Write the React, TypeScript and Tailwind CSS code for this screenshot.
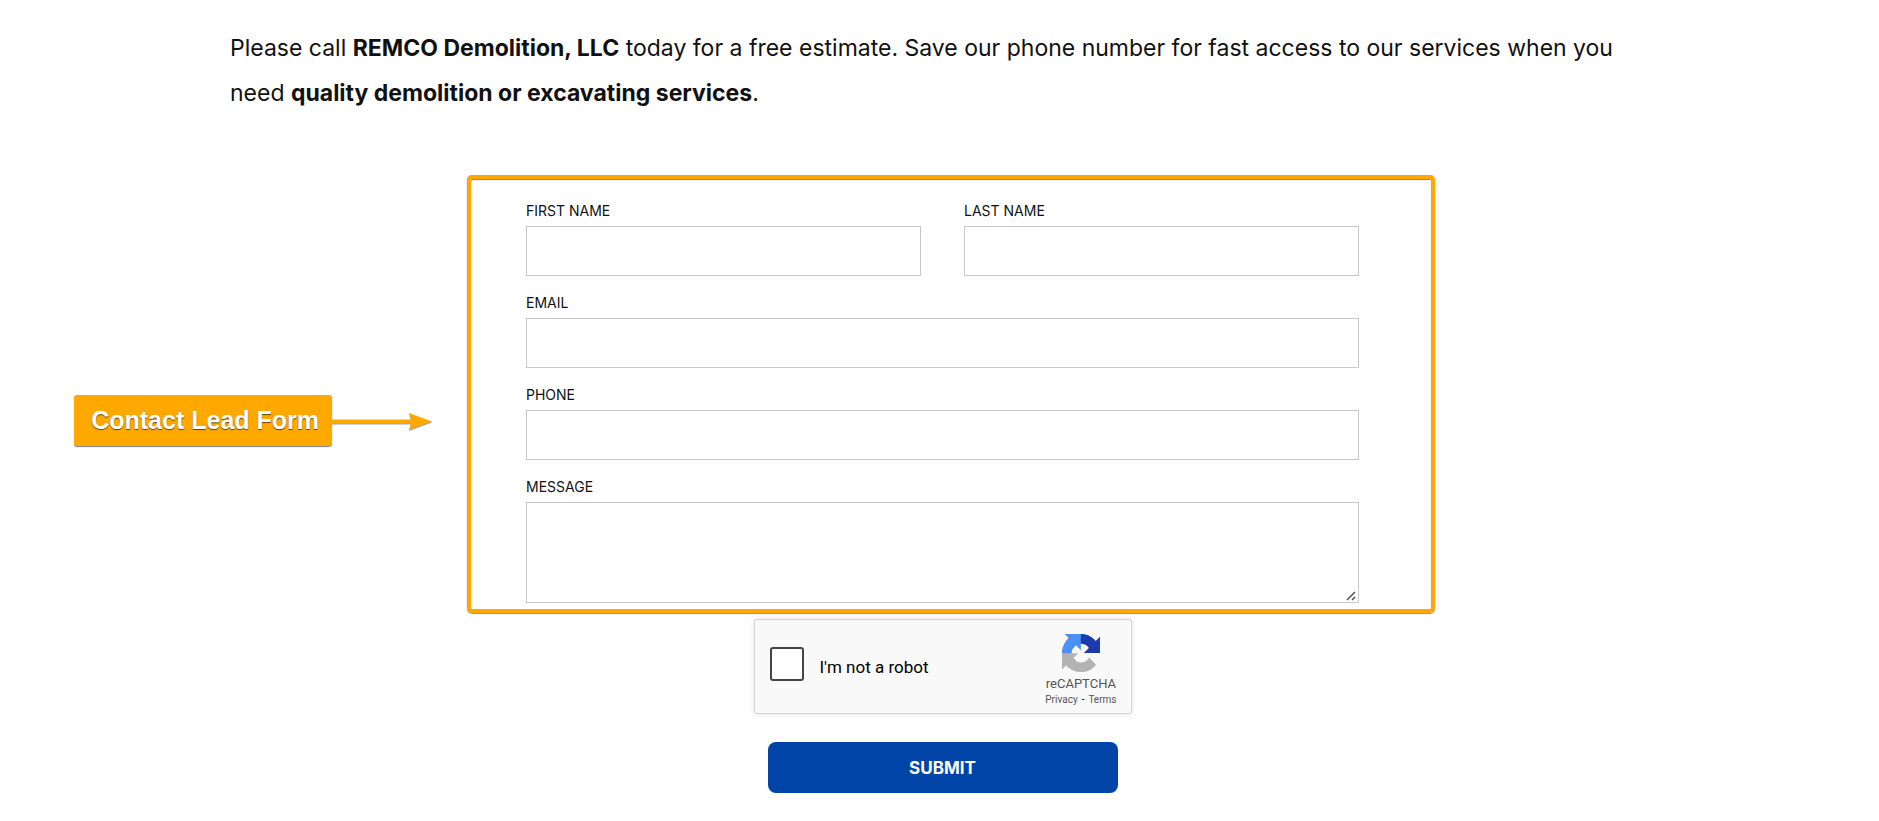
import { useState } from "react";

type FieldProps = {
  id: string;
  label: string;
  type?: string;
};

function Field({ id, label, type = "text" }: FieldProps) {
  return (
    <div className="flex flex-col gap-[3px]">
      <label htmlFor={id} className="text-sm leading-6 uppercase">
        {label}
      </label>
      <input
        id={id}
        name={id}
        type={type}
        className="h-[50px] w-full border border-[#c8c8c8] bg-white px-3 text-base focus:outline-none focus:border-[#0044a8]"
      />
    </div>
  );
}

function MessageField() {
  return (
    <div className="flex flex-col gap-[3px]">
      <label htmlFor="message" className="text-sm leading-6 uppercase">
        Message
      </label>
      <div className="relative">
        <textarea
          id="message"
          name="message"
          className="block h-[101px] w-full resize-y border border-[#c8c8c8] bg-white px-3 py-2 text-base focus:outline-none focus:border-[#0044a8]"
        />
        {/* Resize grip */}
        <svg
          viewBox="0 0 14 14"
          className="pointer-events-none absolute right-px bottom-px size-[14px] bg-white"
          aria-hidden="true"
        >
          <path d="M3 12l8-8M8 12l3-3" fill="none" stroke="#555" strokeWidth="1.6" />
        </svg>
      </div>
    </div>
  );
}

function RecaptchaLogo() {
  return (
    <svg viewBox="0 0 64 64" className="size-[38px]" aria-hidden="true">
      <path
        fill="#1c3aa9"
        d="M64 31.955c-.002-.46-.012-.918-.033-1.373V4.527l-7.203 7.203C50.87 4.5 41.973-.09 32.003-.09 21.628-.09 12.41 4.88 6.55 12.58l11.806 11.93a15.637 15.637 0 0 1 4.782-5.367c2.062-1.61 4.984-2.926 9.02-2.926.486 0 .862.057 1.138.164 4.998.394 9.33 3.153 11.88 7.155l-8.357 8.357c10.585-.042 22.542-.066 27.18.06"
      />
      <path
        fill="#4a90f5"
        d="M31.862.094c-.46.002-.917.012-1.373.032H4.434l7.203 7.203C4.407 13.224-.183 22.12-.183 32.092c0 10.375 4.97 19.592 12.67 25.453l11.93-11.806a15.637 15.637 0 0 1-5.367-4.782c-1.61-2.062-2.926-4.984-2.926-9.02 0-.486.057-.862.164-1.138.394-4.998 3.153-9.33 7.155-11.88l8.357 8.357c-.042-10.585-.066-22.542.06-27.18"
      />
      <path
        fill="#b3b3b3"
        d="M.002 32.23c.002.46.012.918.033 1.373V59.66l7.203-7.203c5.903 7.23 14.8 11.82 24.772 11.82 10.375 0 19.592-4.97 25.452-12.67L45.655 39.676a15.637 15.637 0 0 1-4.782 5.367c-2.062 1.61-4.984 2.926-9.02 2.926-.486 0-.862-.057-1.138-.164-4.998-.394-9.33-3.153-11.88-7.155l8.357-8.357C16.607 32.335 4.65 32.36.013 32.233"
      />
    </svg>
  );
}

function Recaptcha() {
  const [checked, setChecked] = useState(false);

  return (
    <div className="flex h-[95px] w-[378px] items-center justify-between rounded-[3px] border border-[#d3d3d3] bg-[#f9f9f9] pr-[14px] pl-[15px] font-[Roboto,sans-serif] shadow-[0_0_4px_1px_rgba(0,0,0,0.08)]">
      <div className="flex items-center gap-4 pb-[5px]">
        <input
          id="robot"
          type="checkbox"
          checked={checked}
          onChange={(e) => setChecked(e.target.checked)}
          className="size-[34px] appearance-none rounded-[3px] border-2 border-[#444] bg-white checked:bg-[#4a90f5]"
        />
        <label htmlFor="robot" className="pt-[5px] text-[17px] leading-6 text-black">
          I'm not a robot
        </label>
      </div>
      <div className="flex flex-col items-center pt-2 text-[#555]">
        <RecaptchaLogo />
        <p className="mt-1 text-[13px] leading-4">reCAPTCHA</p>
        <p className="flex gap-1 text-[10px] leading-4">
          <a href="#privacy">Privacy</a>
          <span className="text-black">-</span>
          <a href="#terms">Terms</a>
        </p>
      </div>
    </div>
  );
}

function Callout() {
  return (
    <div className="mt-[220px] flex items-center self-start justify-self-end pr-[35px]">
      <p className="rounded-[3px] bg-[#ffa800] py-2 pr-[13px] pl-[17px] font-['Liberation_Sans',sans-serif] text-[25px] leading-[35px] font-bold whitespace-nowrap text-white shadow-[0_1px_1px_rgba(0,0,0,0.5)] [text-shadow:0_1px_1px_rgba(0,0,0,0.6)]">
        Contact Lead Form
      </p>
      <svg viewBox="0 0 100 22" className="h-[22px] w-[100px]" aria-hidden="true">
        <path d="M0 10.5h79L77 4l23 8.500-23 8.500 2-6.500H0z" fill="#666" opacity="0.6" />
        <path d="M0 9.500h79L77 3l23 8.500-23 8 2-6H0z" fill="#ffa800" />
      </svg>
    </div>
  );
}

export default function App() {
  return (
    <main className="bg-white pt-[26px] pb-7 font-[Inter,sans-serif] text-[#111]">
      {/* Intro text */}
      <p className="mx-auto w-full max-w-[1419px] text-[23px] leading-[45px]">
        Please call <strong>REMCO Demolition, LLC</strong> today for a free
        estimate. Save our phone number for fast access to our services when you
        need <strong>quality demolition or excavating services</strong>.
      </p>

      {/* Contact form */}
      <div className="mt-[59px] grid grid-cols-[467fr_968fr_444fr]">
        <Callout />
        <form onSubmit={(e) => e.preventDefault()}>
          <div className="flex flex-col gap-[15px] rounded-[5px] border-4 border-[#ffa800] pt-5 pr-[72px] pb-[6px] pl-[55px] shadow-[0_0_1px_rgba(0,0,0,0.4),0_1px_1px_rgba(0,0,0,0.4),inset_0_1px_1px_rgba(0,0,0,0.5)]">
            <div className="grid grid-cols-2 gap-[43px]">
              <Field id="first-name" label="First Name" />
              <Field id="last-name" label="Last Name" />
            </div>
            <Field id="email" label="Email" type="email" />
            <Field id="phone" label="Phone" type="tel" />
            <MessageField />
          </div>

          <div className="flex flex-col items-center gap-7 pt-[6px] pr-[76px] pl-[59px]">
            <Recaptcha />
            <button
              type="submit"
              className="h-[51px] w-[350px] rounded-lg bg-[#0044a8] text-[17px] leading-6 font-bold text-white uppercase hover:bg-[#003a90]"
            >
              Submit
            </button>
          </div>
        </form>
      </div>
    </main>
  );
}
